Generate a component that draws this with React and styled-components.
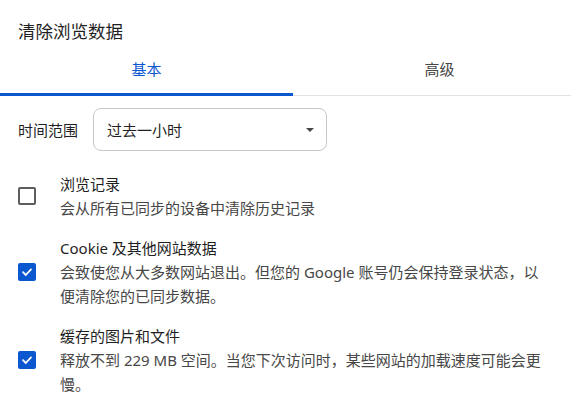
import React from "react";
import styled, { createGlobalStyle } from "styled-components";

const GlobalStyle = createGlobalStyle`
  html, body {
    margin: 0;
    padding: 0;
    background: #ffffff;
  }
  body {
    font-family: "Noto Sans", "Noto Sans CJK SC", sans-serif;
    color: #1f1f1f;
    -webkit-font-smoothing: antialiased;
  }
`;

const Dialog = styled.div`
  width: 571px;
  height: 412px;
  overflow: hidden;
  background: #fff;
`;

const Title = styled.h1`
  margin: 0;
  padding: 19px 18px 5px;
  font-size: 17.5px;
  font-weight: 400;
  line-height: 24px;
  color: #1f1f1f;
`;

const TabRow = styled.div`
  display: flex;
  width: 571px;
  border-bottom: 1px solid #e3e3e3;
`;

const Tab = styled.button`
  flex: 0 0 293px;
  height: 48px;
  margin-bottom: -1px;
  padding: 0 0 3px;
  border: none;
  border-bottom: 3px solid ${(p) => (p.active ? "#0b57d0" : "transparent")};
  background: none;
  font-family: inherit;
  font-size: 15px;
  line-height: 24px;
  color: ${(p) => (p.active ? "#0b57d0" : "#474747")};
  cursor: pointer;
`;

const RangeRow = styled.div`
  display: flex;
  align-items: center;
  gap: 15px;
  padding: 12px 18px 0;
`;

const RangeLabel = styled.span`
  font-size: 15px;
  line-height: 24px;
  color: #1f1f1f;
`;

const Select = styled.div`
  display: flex;
  align-items: center;
  justify-content: space-between;
  box-sizing: border-box;
  width: 234px;
  height: 43px;
  padding: 0 12px 0 13px;
  border: 1px solid #c7c7c7;
  border-radius: 8px;
  font-size: 15px;
  color: #1f1f1f;
`;

const Caret = styled.span`
  width: 0;
  height: 0;
  border-left: 4.5px solid transparent;
  border-right: 4.5px solid transparent;
  border-top: 4.5px solid #474747;
`;

const List = styled.div`
  display: flex;
  flex-direction: column;
  gap: 16px;
  padding: 21px 0 0 18px;
`;

const Item = styled.label`
  display: flex;
  align-items: center;
  gap: 24px;
  cursor: pointer;
`;

const Box = styled.span`
  flex: 0 0 auto;
  display: flex;
  align-items: center;
  justify-content: center;
  box-sizing: border-box;
  width: 18px;
  height: 18px;
  border-radius: 2px;
  border: 2px solid ${(p) => (p.checked ? "#0b57d0" : "#5e5e5e")};
  background: ${(p) => (p.checked ? "#0b57d0" : "transparent")};
`;

const Text = styled.div`
  width: 500px;
  font-size: 15px;
  line-height: 24px;
`;

const ItemLabel = styled.div`
  color: #1f1f1f;
`;

const ItemDesc = styled.div`
  color: #474747;
  white-space: pre-line;
`;

const items = [
  {
    id: "history",
    label: "浏览记录",
    desc: "会从所有已同步的设备中清除历史记录",
    checked: false,
  },
  {
    id: "cookies",
    label: "Cookie 及其他网站数据",
    desc: "会致使您从大多数网站退出。但您的 Google 账号仍会保持登录状态，以\n便清除您的已同步数据。",
    checked: true,
  },
  {
    id: "cache",
    label: "缓存的图片和文件",
    desc: "释放不到 229 MB 空间。当您下次访问时，某些网站的加载速度可能会更慢。",
    checked: true,
  },
];

function Check({ checked }) {
  return (
    <Box checked={checked}>
      {checked && (
        <svg width="12" height="12" viewBox="0 0 12 12">
          <path
            d="M2 6.2 L4.8 9 L10 3.4"
            fill="none"
            stroke="#fff"
            strokeWidth="1.8"
            strokeLinecap="round"
            strokeLinejoin="round"
          />
        </svg>
      )}
    </Box>
  );
}

export default function App() {
  const [tab, setTab] = React.useState("basic");
  const [state, setState] = React.useState(
    Object.fromEntries(items.map((i) => [i.id, i.checked]))
  );

  return (
    <Dialog>
      <GlobalStyle />
      <Title>清除浏览数据</Title>
      <TabRow>
        <Tab active={tab === "basic"} onClick={() => setTab("basic")}>
          基本
        </Tab>
        <Tab active={tab === "advanced"} onClick={() => setTab("advanced")}>
          高级
        </Tab>
      </TabRow>
      <RangeRow>
        <RangeLabel>时间范围</RangeLabel>
        <Select>
          <span>过去一小时</span>
          <Caret />
        </Select>
      </RangeRow>
      <List>
        {items.map((item) => (
          <Item
            key={item.id}
            onClick={() => setState({ ...state, [item.id]: !state[item.id] })}
          >
            <Check checked={state[item.id]} />
            <Text>
              <ItemLabel>{item.label}</ItemLabel>
              <ItemDesc>{item.desc}</ItemDesc>
            </Text>
          </Item>
        ))}
      </List>
    </Dialog>
  );
}
